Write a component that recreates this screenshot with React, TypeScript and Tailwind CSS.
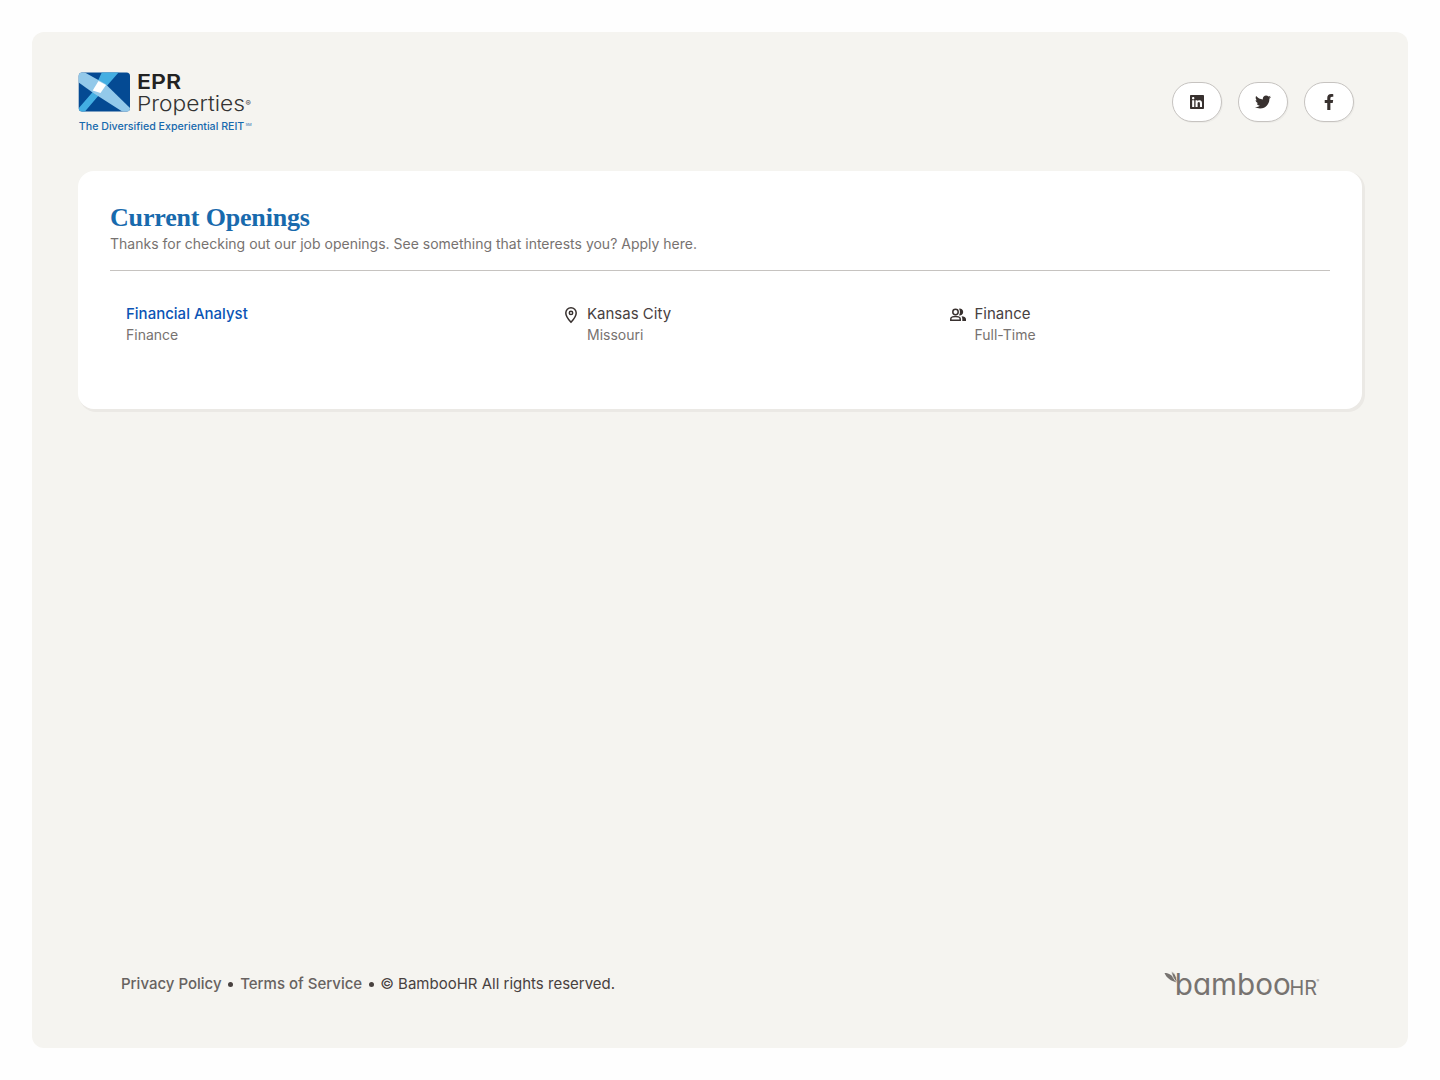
import React from 'react';
import { FaFacebookF, FaLinkedin, FaTwitter } from 'react-icons/fa';

type Opening = {
  title: string;
  department: string;
  city: string;
  state: string;
  team: string;
  type: string;
};

const openings: Opening[] = [
  {
    title: 'Financial Analyst',
    department: 'Finance',
    city: 'Kansas City',
    state: 'Missouri',
    team: 'Finance',
    type: 'Full-Time',
  },
];

const socialLinks = [
  { name: 'LinkedIn', icon: FaLinkedin },
  { name: 'Twitter', icon: FaTwitter },
  { name: 'Facebook', icon: FaFacebookF },
];

function CompanyLogo() {
  return (
    <svg
      width="180"
      height="70"
      viewBox="0 -6 180 70"
      role="img"
      aria-label="EPR Properties"
      className="-mt-1.5"
    >
      <defs>
        <clipPath id="mark">
          <rect x="0.7" y="2.6" width="51.3" height="39" rx="3.5" />
        </clipPath>
      </defs>
      <g clipPath="url(#mark)">
        <rect x="0" y="2" width="53" height="40" fill="#044a93" />
        <path d="M24 2h17L27 18 6.500 42H0v-3l14.700-17z" fill="#43aee2" />
        <path d="M0 2h6l21.500 12L53 39v3h-8L15.300 23 0 12z" fill="#93c9ea" />
        <path d="M20.500 11l7.500 4-5.500 8-7.800-2.500z" fill="#fff" />
      </g>
      <g fontFamily="Inter, sans-serif">
        <text
          x="59"
          y="18.500"
          fontSize="20.500"
          fontWeight="600"
          fill="#222"
          textLength="44"
          lengthAdjust="spacingAndGlyphs"
        >
          EPR
        </text>
        <text
          x="59"
          y="41.200"
          fontSize="20.500"
          fontWeight="300"
          fill="#333"
          textLength="108"
          lengthAdjust="spacingAndGlyphs"
        >
          Properties
        </text>
        <text x="167.500" y="35.500" fontSize="8" fill="#444">
          ®
        </text>
        <text
          x="0.800"
          y="59.500"
          fontSize="10.500"
          fontWeight="500"
          fill="#1769ad"
          textLength="165.500"
          lengthAdjust="spacingAndGlyphs"
        >
          The Diversified Experiential REIT
        </text>
        <text x="167.500" y="55.500" fontSize="4" fill="#1769ad">
          SM
        </text>
      </g>
    </svg>
  );
}

function BambooLogo() {
  return (
    <svg
      width="160"
      height="36"
      viewBox="0 0 160 36"
      role="img"
      aria-label="BambooHR"
      className="[font-feature-settings:'cv11']"
    >
      <path d="M3.500 7c4.500 0 9.500 2.500 12 9.500C10 15 5.500 12 3.500 7z" fill="#777370" />
      <path
        d="M10.500 5.500c4 2 5.500 6 5.500 11-3-3-5-6-5.500-11z"
        fill="#777370"
        stroke="#f5f4ef"
        strokeWidth=".8"
      />
      <g fontFamily="Inter, sans-serif" fill="#777370">
        <text
          x="13.800"
          y="29"
          fontSize="30"
          fontWeight="400"
          textLength="116"
          lengthAdjust="spacingAndGlyphs"
        >
          bamboo
        </text>
        <text
          x="128.500"
          y="29"
          fontSize="20"
          fontWeight="400"
          textLength="27.500"
          lengthAdjust="spacingAndGlyphs"
        >
          HR
        </text>
        <text x="155.500" y="16" fontSize="4">
          ®
        </text>
      </g>
    </svg>
  );
}

function PinIcon() {
  return (
    <svg width="14" height="18" viewBox="0 0 14 18" fill="none" stroke="#38312f" strokeWidth="1.5">
      <path d="M7 16.200C4.600 13.600 1.800 10.400 1.800 6.900a5.200 5.200 0 0 1 10.400 0c0 3.500-2.800 6.700-5.200 9.300z" />
      <circle cx="7" cy="6.900" r="1.700" />
    </svg>
  );
}

function PeopleIcon() {
  return (
    <svg width="18" height="14" viewBox="0 0 18 14" fill="none">
      <circle cx="6.500" cy="4" r="2.700" stroke="#38312f" strokeWidth="1.500" />
      <path
        d="M1.800 12.200v-1.400c0-1 .7-1.600 1.700-1.900a11 11 0 0 1 6 0c1 .3 1.700.9 1.700 1.900v1.400z"
        stroke="#38312f"
        strokeWidth="1.500"
      />
      <path
        d="M10 .7a3.400 3.400 0 1 1 0 6.600c1.300-1.900 1.300-4.700 0-6.600zM12.600 8.300c2.300.3 4.400 1 4.400 2.800V13h-3.700v-2.100c0-1-.3-1.800-.7-2.600z"
        fill="#38312f"
      />
    </svg>
  );
}

function OpeningRow({ opening }: { opening: Opening }) {
  return (
    <li className="flex px-4 pt-8 text-[15px] leading-[21px]">
      <div className="w-[438px]">
        <a className="block font-medium text-[#0b54b5]">{opening.title}</a>
        <p className="text-[14px] text-[#777270]">{opening.department}</p>
      </div>
      <div className="flex w-[385px] gap-[9px]">
        <span className="pt-[3px]">
          <PinIcon />
        </span>
        <div>
          <p className="text-[#48413f]">{opening.city}</p>
          <p className="text-[14px] text-[#777270]">{opening.state}</p>
        </div>
      </div>
      <div className="flex gap-[7.5px]">
        <span className="pt-[5px]">
          <PeopleIcon />
        </span>
        <div>
          <p className="text-[#48413f]">{opening.team}</p>
          <p className="text-[14px] text-[#777270]">{opening.type}</p>
        </div>
      </div>
    </li>
  );
}

export default function App() {
  return (
    <div className="h-screen bg-[#fefefe] p-8 font-['Inter',sans-serif]">
      <div className="flex h-full flex-col rounded-xl bg-[#f5f4f0] px-[46px] pt-[38px] pb-[46px]">
        <header className="flex h-[101px] items-start justify-between">
          <CompanyLogo />
          <nav className="flex gap-4 pt-3 pr-2">
            {socialLinks.map(({ name, icon: Icon }) => (
              <a
                key={name}
                aria-label={name}
                className="flex h-10 w-[50px] items-center justify-center rounded-full border border-[#c6c3c0] bg-white text-[#38312f] shadow-[1px_1px_0_0_rgba(56,49,47,0.04)]"
              >
                <Icon size={16} />
              </a>
            ))}
          </nav>
        </header>

        <main className="h-[238px] rounded-2xl bg-white px-8 pt-8 shadow-[2px_2px_0_1px_rgba(56,49,47,0.05)]">
          <h2 className="font-['Liberation_Serif',serif] text-[26px] leading-[30px] font-bold tracking-[-0.17px] text-[#186aad]">
            Current Openings
          </h2>
          <p className="text-[14px] leading-[21px] text-[#777270]">
            Thanks for checking out our job openings. See something that interests you? Apply here.
          </p>
          <hr className="mt-4 border-[#c6c3c0]" />
          <ul>
            {openings.map((opening) => (
              <OpeningRow key={opening.title} opening={opening} />
            ))}
          </ul>
        </main>

        <footer className="mt-auto flex items-center justify-between pr-[41px] pl-[43px]">
          <div className="flex items-center text-[15px] leading-[22px] text-[#48413f]">
            <a className="font-medium text-[#676260]">Privacy Policy</a>
            <span className="mx-[6.8px] size-[5px] rounded-full bg-[#48413f]" />
            <a className="font-medium text-[#676260]">Terms of Service</a>
            <span className="mx-[6.5px] size-[5px] rounded-full bg-[#48413f]" />
            <span>© BambooHR All rights reserved.</span>
          </div>
          <BambooLogo />
        </footer>
      </div>
    </div>
  );
}
